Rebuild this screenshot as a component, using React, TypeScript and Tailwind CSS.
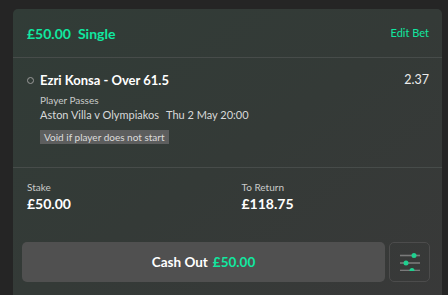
import React from 'react';

const green = 'text-[#10e8a0]';

function SlidersIcon() {
    return (
        <svg width="22" height="18" viewBox="0 0 22 18" fill="none">
            <line x1="1" y1="2.5" x2="21" y2="2.5" stroke="#7a7a7a" strokeWidth="1.6"/>
            <line x1="1" y1="10" x2="21" y2="10" stroke="#7a7a7a" strokeWidth="1.6"/>
            <line x1="1" y1="17.5" x2="21" y2="17.5" stroke="#7a7a7a" strokeWidth="1.6"/>
            <circle cx="15" cy="2.5" r="2.5" fill="#1fd08f"/>
            <circle cx="7" cy="10" r="2.5" fill="#1fd08f"/>
            <circle cx="13" cy="17.5" r="2.5" fill="#1fd08f"/>
        </svg>
    );
}

export default function App() {
    return (
        <div
            className="h-[295px] w-[448px] overflow-hidden bg-[#252525] pl-[13px] pt-[9px]"
            style={{fontFamily: 'Lato, "Noto Sans", Arial, sans-serif'}}
        >
            <div className="h-[300px] w-[429px] rounded-t-[5px] bg-gradient-to-br from-[#313c37] via-[#343a37] to-[#393939]">
                {/* header */}
                <div className="flex h-[49px] items-center justify-between border-b border-[#474c4a] pl-[14px] pr-[13px]">
                    <div className={`flex gap-[7px] text-[14px] font-bold ${green}`}>
                        <span>£50.00</span>
                        <span>Single</span>
                    </div>
                    <a className={`text-[11px] ${green}`}>Edit Bet</a>
                </div>

                {/* selection */}
                <div className="border-b border-[#474c4a] pb-[20px] pl-[14px] pr-[13px] pt-[12px]">
                    <div className="flex items-center justify-between">
                        <div className="flex items-center gap-[6px]">
                            <span className="h-[7px] w-[7px] rounded-full border border-[#9a9a9a]"/>
                            <span className="text-[13px] font-bold leading-[20px] text-white">Ezri Konsa - Over 61.5</span>
                        </div>
                        <span className="text-[12.5px] leading-[20px] text-[#ececec]">2.37</span>
                    </div>
                    <div className="pl-[13px]">
                        <div className="mt-[3px] text-[10px] leading-[14px] text-[#c9cbca]">Player Passes</div>
                        <div className="text-[11px] leading-[16px] text-[#d8d9d9]">
                            Aston Villa v Olympiakos<span className="ml-[7px]">Thu 2 May 20:00</span>
                        </div>
                        <div className="mt-[6px] inline-block bg-[#5d5e5e] px-[4px] text-[10px] leading-[14px] text-[#dcdcdc]">
                            Void if player does not start
                        </div>
                    </div>
                </div>

                {/* stake / return */}
                <div className="grid grid-cols-2 pl-[14px] pt-[12px]">
                    <div>
                        <div className="text-[10px] leading-[14px] text-[#c9cbca]">Stake</div>
                        <div className="mt-[1px] text-[14px] font-bold leading-[18px] text-white">£50.00</div>
                    </div>
                    <div className="pl-[7px]">
                        <div className="text-[10px] leading-[14px] text-[#c9cbca]">To Return</div>
                        <div className="mt-[1px] text-[14px] font-bold leading-[18px] text-white">£118.75</div>
                    </div>
                </div>

                {/* actions */}
                <div className="mt-[29px] flex gap-[4px] pl-[9px] pr-[12px]">
                    <button className="flex h-[40px] flex-1 items-center justify-center gap-[5px] rounded-[5px] bg-[#505050] text-[13.5px] font-bold text-white">
                        <span>Cash Out</span>
                        <span className={green}>£50.00</span>
                    </button>
                    <button className="flex h-[40px] w-[41px] items-center justify-center rounded-[5px] border border-[#4c4c4c]">
                        <SlidersIcon/>
                    </button>
                </div>
            </div>
        </div>
    );
}
